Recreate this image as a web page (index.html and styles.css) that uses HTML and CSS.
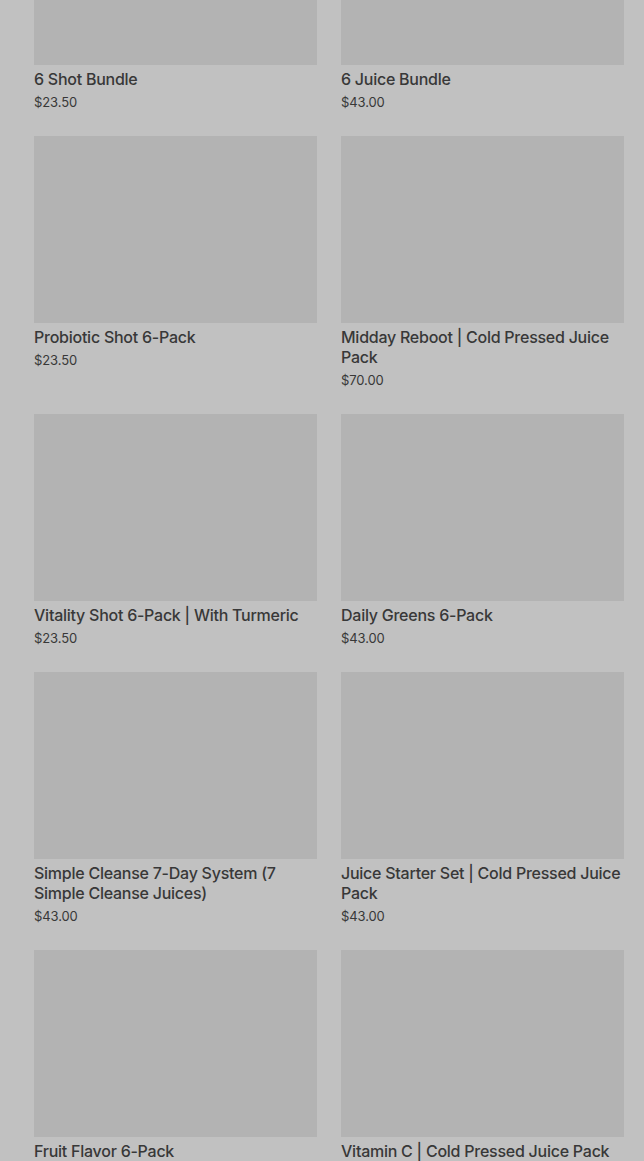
FILE: index.html
```html
<!DOCTYPE html>
<html lang="en">
<head>
    <meta charset="UTF-8">
    <meta name="viewport" content="width=device-width, initial-scale=1.0">
    <title>Bundles &amp; Packs</title>
    <link rel="stylesheet" href="styles.css">
</head>
<body>

    <div class="catalogo">
        <div class="producto">
            <div class="foto"></div>
            <h3>6 Shot Bundle</h3>
            <p class="precio">$23.50</p>
        </div>
        <div class="producto">
            <div class="foto"></div>
            <h3>6 Juice Bundle</h3>
            <p class="precio">$43.00</p>
        </div>

        <div class="producto">
            <div class="foto"></div>
            <h3>Probiotic Shot 6-Pack</h3>
            <p class="precio">$23.50</p>
        </div>
        <div class="producto">
            <div class="foto"></div>
            <h3>Midday Reboot | Cold Pressed Juice Pack</h3>
            <p class="precio">$70.00</p>
        </div>

        <div class="producto">
            <div class="foto"></div>
            <h3>Vitality Shot 6-Pack | With Turmeric</h3>
            <p class="precio">$23.50</p>
        </div>
        <div class="producto">
            <div class="foto"></div>
            <h3>Daily Greens 6-Pack</h3>
            <p class="precio">$43.00</p>
        </div>

        <div class="producto">
            <div class="foto"></div>
            <h3>Simple Cleanse 7-Day System (7 Simple Cleanse Juices)</h3>
            <p class="precio">$43.00</p>
        </div>
        <div class="producto">
            <div class="foto"></div>
            <h3>Juice Starter Set | Cold Pressed Juice Pack</h3>
            <p class="precio">$43.00</p>
        </div>

        <div class="producto">
            <div class="foto"></div>
            <h3>Fruit Flavor 6-Pack</h3>
            <p class="precio">$43.00</p>
        </div>
        <div class="producto">
            <div class="foto"></div>
            <h3>Vitamin C | Cold Pressed Juice Pack</h3>
            <p class="precio">$43.00</p>
        </div>
    </div>

</body>
</html>
```

FILE: styles.css
```css
body {
    font-family: Inter, "Noto Sans", Arial, sans-serif;
    background-color: #c1c1c1;
    color: #383838;
    margin: 0;
    padding: 0;
    overflow: hidden;
    height: 1161px;
}

.catalogo {
    display: grid;
    grid-template-columns: 1fr 1fr;
    column-gap: 24px;
    row-gap: 25px;
    padding: 0 20px 0 34px;
    margin-top: -122px;
}

.foto {
    height: 187px;
    background-color: #b3b3b3;
}

.producto h3 {
    font-size: 16px;
    font-weight: 500;
    line-height: 20px;
    letter-spacing: -0.25px;
    margin: 4px 0 4px 0;
}

.precio {
    font-size: 13px;
    line-height: 18px;
    letter-spacing: -0.1px;
    margin: 0;
}
```
